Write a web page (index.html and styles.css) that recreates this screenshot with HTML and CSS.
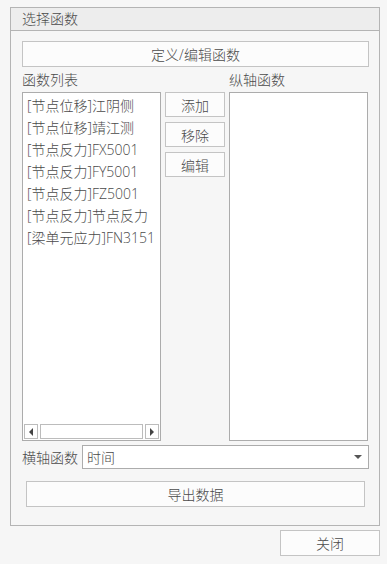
FILE: index.html
```html
<!DOCTYPE html>
<html lang="zh-CN">
<head>
    <meta charset="UTF-8">
    <title>选择函数</title>
    <link rel="stylesheet" href="styles.css">
</head>
<body>
    <div class="group">
        <div class="group-title">选择函数</div>
        <div class="group-body">
            <button class="btn btn-wide">定义/编辑函数</button>
            <div class="pick">
                <div class="pick-label">函数列表</div>
                <div class="pick-label"></div>
                <div class="pick-label">纵轴函数</div>
                <div class="list list-left">
                    <ul class="items">
                        <li>[节点位移]江阴侧</li>
                        <li>[节点位移]靖江测</li>
                        <li>[节点反力]FX5001</li>
                        <li>[节点反力]FY5001</li>
                        <li>[节点反力]FZ5001</li>
                        <li>[节点反力]节点反力</li>
                        <li>[梁单元应力]FN3151</li>
                    </ul>
                    <div class="hscroll">
                        <span class="arrow-btn"><span class="tri tri-left"></span></span>
                        <span class="track"></span>
                        <span class="arrow-btn"><span class="tri tri-right"></span></span>
                    </div>
                </div>
                <div class="actions">
                    <button class="btn btn-small">添加</button>
                    <button class="btn btn-small">移除</button>
                    <button class="btn btn-small">编辑</button>
                </div>
                <div class="list"></div>
            </div>
            <div class="combo-row">
                <span class="combo-label">横轴函数</span>
                <div class="combo">
                    <span>时间</span>
                    <span class="tri tri-down"></span>
                </div>
            </div>
            <button class="btn btn-export">导出数据</button>
        </div>
    </div>
    <div class="footer">
        <button class="btn btn-close">关闭</button>
    </div>
</body>
</html>
```

FILE: styles.css
```css
body {
    margin: 0;
    background-color: #f6f6f6;
    font-family: 'Open Sans', 'Noto Sans CJK SC', sans-serif;
    font-size: 14px;
    font-weight: 300;
    color: #4a4a4a;
}
.group {
    margin: 7px 0 0 10px;
    width: 368px;
    border: 1px solid #b4b4b4;
}
.group-title {
    height: 22px;
    line-height: 22px;
    padding-left: 11px;
    background-color: #ededed;
    border-bottom: 1px solid #b4b4b4;
}
.group-body {
    padding: 10px 10px 18px 11px;
    display: flex;
    flex-direction: column;
}
.btn {
    font-family: inherit;
    font-size: 14px;
    font-weight: 300;
    color: #4a4a4a;
    background-color: #fcfcfc;
    border: 1px solid #c4c4c4;
    padding: 0;
    cursor: pointer;
}
.btn-wide {
    height: 26px;
}
.pick {
    display: grid;
    grid-template-columns: 139px 60px 139px;
    grid-template-rows: 25px 349px;
    column-gap: 4px;
}
.pick-label {
    line-height: 20px;
    align-self: end;
    padding-bottom: 2px;
}
.list {
    background-color: #fff;
    border: 1px solid #acacac;
    box-sizing: border-box;
    position: relative;
}
.list-left {
    display: flex;
    flex-direction: column;
}
.items {
    list-style: none;
    margin: 0;
    padding: 2px 0 0 4px;
    flex: 1;
    white-space: nowrap;
    overflow: hidden;
}
.items li {
    height: 22px;
    line-height: 22px;
}
.hscroll {
    display: flex;
    height: 15px;
    gap: 2px;
    margin: 0 1px 1px 1px;
}
.arrow-btn, .track {
    border: 1px solid #bcbcbc;
    box-sizing: border-box;
    background-color: #fff;
}
.arrow-btn {
    width: 14px;
    display: flex;
    align-items: center;
    justify-content: center;
}
.track {
    flex: 1;
}
.tri {
    width: 0;
    height: 0;
}
.tri-left {
    border-top: 4px solid transparent;
    border-bottom: 4px solid transparent;
    border-right: 4px solid #444;
}
.tri-right {
    border-top: 4px solid transparent;
    border-bottom: 4px solid transparent;
    border-left: 4px solid #444;
}
.tri-down {
    border-left: 4px solid transparent;
    border-right: 4px solid transparent;
    border-top: 4px solid #555;
}
.actions {
    display: flex;
    flex-direction: column;
    gap: 5px;
}
.btn-small {
    height: 25px;
}
.combo-row {
    display: flex;
    align-items: center;
    margin-top: 4px;
    gap: 4px;
}
.combo {
    flex: 1;
    height: 24px;
    box-sizing: border-box;
    border: 1px solid #acacac;
    background-color: #fff;
    display: flex;
    align-items: center;
    justify-content: space-between;
    padding: 0 6px 0 4px;
}
.btn-export {
    height: 26px;
    margin: 12px 4px 0 4px;
}
.footer {
    display: flex;
    justify-content: flex-end;
    padding: 4px 7px 0 0;
}
.btn-close {
    width: 100px;
    height: 26px;
}
```
